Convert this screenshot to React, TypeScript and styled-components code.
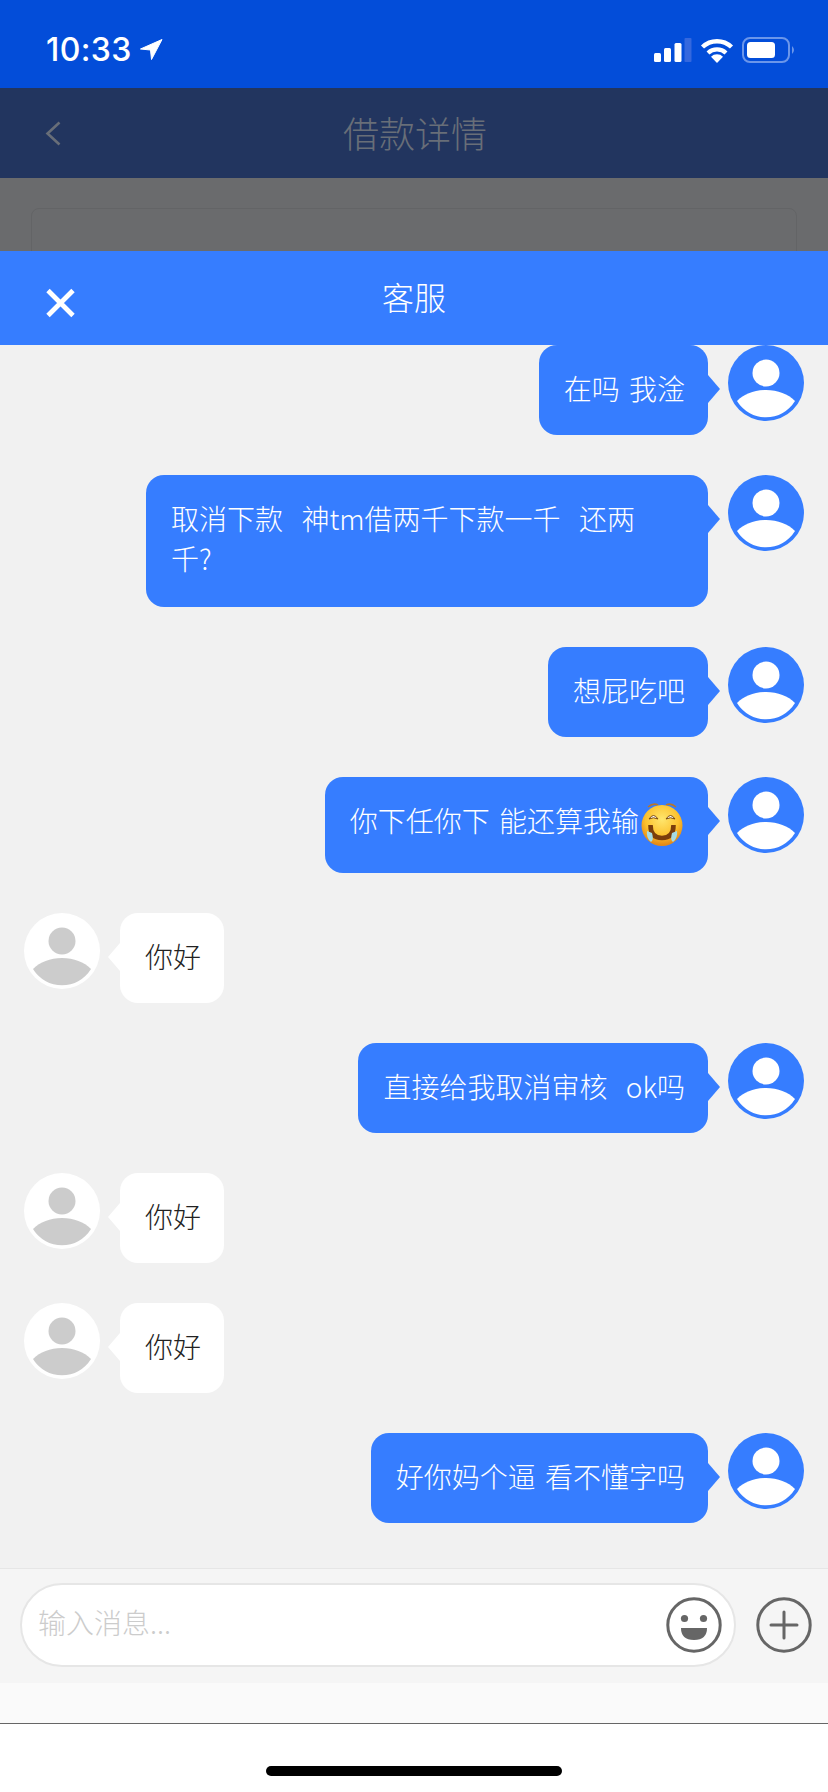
import { FC } from 'react';
import styled, { createGlobalStyle } from 'styled-components';

const GlobalStyle = createGlobalStyle`
  html, body {
    margin: 0;
    padding: 0;
    background: #fff;
  }
  * {
    box-sizing: border-box;
  }
`;

const BLUE = '#367dff';

interface Message {
  id: number;
  mine: boolean;
  text: string;
  emoji?: boolean;
  wide?: boolean;
}

const messages: Message[] = [
  { id: 1, mine: true, text: '在吗 我淦' },
  { id: 2, mine: true, text: '取消下款  神tm借两千下款一千  还两\n千?', wide: true },
  { id: 3, mine: true, text: '想屁吃吧' },
  { id: 4, mine: true, text: '你下任你下 能还算我输', emoji: true },
  { id: 5, mine: false, text: '你好' },
  { id: 6, mine: true, text: '直接给我取消审核  ok吗' },
  { id: 7, mine: false, text: '你好' },
  { id: 8, mine: false, text: '你好' },
  { id: 9, mine: true, text: '好你妈个逼 看不懂字吗' },
];

const Avatar: FC<{ mine: boolean }> = ({ mine }) => {
  const bg = mine ? BLUE : '#ffffff';
  const fg = mine ? '#ffffff' : '#cccccc';
  return (
    <S.AvatarIcon width="76" height="76" viewBox="0 0 76 76">
      <circle cx="38" cy="38" r="38" fill={bg} />
      <circle cx="38" cy="28" r="13.5" fill={fg} />
      <path d="M9 56 C16 49 26 45 38 45 C50 45 60 49 67 56 A34 34 0 0 1 9 56 Z" fill={fg} />
    </S.AvatarIcon>
  );
};

const LaughEmoji = () => (
  <S.Emoji width="46" height="44" viewBox="0 0 46 44">
    <defs>
      <radialGradient id="laughFace" cx="50%" cy="35%" r="62%">
        <stop offset="0%" stopColor="#ffe66e" />
        <stop offset="65%" stopColor="#fcc22f" />
        <stop offset="100%" stopColor="#e58a16" />
      </radialGradient>
    </defs>
    <path d="M9 5 Q14 0.5 19 3 M27 3 Q32 0.5 37 5" stroke="#b8772a" strokeWidth="1.6" fill="none" />
    <circle cx="23" cy="23.5" r="20.5" fill="url(#laughFace)" />
    <path d="M10 17 Q14.5 10 19 17 Q14.5 14.5 10 17 Z M27 17 Q31.5 10 36 17 Q31.5 14.5 27 17 Z" fill="#fff" stroke="#7a4a12" strokeWidth="1" />
    <path d="M11.5 23 Q11.5 36 23 36 Q34.5 36 34.5 23" stroke="#7a3d0c" strokeWidth="4.6" fill="none" />
    <path d="M8 29 Q7 36 12 40 Q15 38 13 31 Z M38 29 Q39 36 34 40 Q31 38 33 31 Z" fill="#a5dbe4" />
  </S.Emoji>
);

const App: FC = () => (
  <S.Screen>
    <GlobalStyle />
    <S.StatusBar>
      <S.TimeGroup>
        <S.Time>10:33</S.Time>
        <svg width="23" height="21" viewBox="0 0 23 21">
          <path d="M22 0.5 L0.5 10 L10.5 11 L11.5 20.5 Z" fill="#fff" stroke="#fff" strokeLinejoin="round" />
        </svg>
      </S.TimeGroup>
      <S.StatusIcons>
        <svg width="38" height="24" viewBox="0 0 38 24">
          <rect x="0" y="15" width="7" height="9" rx="1.5" fill="#fff" />
          <rect x="10" y="10" width="7" height="14" rx="1.5" fill="#fff" />
          <rect x="20.5" y="5" width="7" height="19" rx="1.5" fill="#fff" />
          <rect x="30.5" y="0" width="7" height="24" rx="1" fill="#3568de" />
        </svg>
        <svg width="34" height="25" viewBox="0 0 34 25">
          <path d="M2.5 9 A21 21 0 0 1 31.5 9" stroke="#fff" strokeWidth="4.4" fill="none" />
          <path d="M8 15 A13 13 0 0 1 26 15" stroke="#fff" strokeWidth="4.2" fill="none" />
          <path d="M11 18.8 A8.5 8.5 0 0 1 23 18.8 L17 25 Z" fill="#fff" />
        </svg>
        <svg width="54" height="26" viewBox="0 0 54 26">
          <rect x="1" y="1" width="46" height="24" rx="7" fill="none" stroke="#6b96ea" strokeWidth="2" />
          <rect x="5" y="5" width="28" height="16" rx="3.5" fill="#fff" />
          <path d="M50 9 Q54 13 50 17 Z" fill="#6b96ea" />
        </svg>
      </S.StatusIcons>
    </S.StatusBar>

    <S.NavBar>
      <S.BackIcon width="17" height="25" viewBox="0 0 17 25">
        <path d="M14.5 1.5 L2.5 12.5 L14.5 23.5" stroke="#686e78" strokeWidth="2.6" fill="none" />
      </S.BackIcon>
      <S.NavTitle>借款详情</S.NavTitle>
    </S.NavBar>

    <S.Dimmed>
      <S.GhostCard />
    </S.Dimmed>

    <S.ChatHeader>
      <S.CloseIcon width="31" height="30" viewBox="0 0 31 30">
        <path d="M3 2.5 L28 27.5 M28 2.5 L3 27.5" stroke="#fff" strokeWidth="4.8" />
      </S.CloseIcon>
      <S.ChatTitle>客服</S.ChatTitle>
    </S.ChatHeader>

    <S.MessageList>
      {messages.map((message) => (
        <S.Row key={message.id} $mine={message.mine}>
          {!message.mine && <Avatar mine={false} />}
          <S.Bubble $mine={message.mine} $wide={message.wide}>
            {message.text}
            {message.emoji && <LaughEmoji />}
          </S.Bubble>
          {message.mine && <Avatar mine />}
        </S.Row>
      ))}
    </S.MessageList>

    <S.Composer>
      <S.InputPill>
        <S.Input placeholder="输入消息..." readOnly />
        <svg width="56" height="56" viewBox="0 0 56 56">
          <circle cx="28" cy="28" r="26.2" fill="none" stroke="#666" strokeWidth="3" />
          <circle cx="18.5" cy="21.5" r="3.6" fill="#666" />
          <circle cx="37.5" cy="21.5" r="3.6" fill="#666" />
          <path d="M15 31 H41 Q41 43 28 43 Q15 43 15 31 Z" fill="#666" />
        </svg>
      </S.InputPill>
      <svg width="56" height="56" viewBox="0 0 56 56">
        <circle cx="28" cy="28" r="26.2" fill="none" stroke="#666" strokeWidth="3" />
        <path d="M28 15 V41 M15 28 H41" stroke="#666" strokeWidth="3" strokeLinecap="round" />
      </svg>
    </S.Composer>
    <S.ComposerFoot />

    <S.HomeArea>
      <S.HomeIndicator />
    </S.HomeArea>
  </S.Screen>
);

const S = {
  Screen: styled.div`
    width: 828px;
    height: 1792px;
    display: flex;
    flex-direction: column;
    overflow: hidden;
    background: #fff;
    font-family: 'Noto Sans CJK SC', 'Noto Sans', sans-serif;
    font-weight: 300;
  `,
  StatusBar: styled.div`
    height: 88px;
    flex: none;
    display: flex;
    justify-content: space-between;
    align-items: flex-start;
    padding: 37px 32px 0 46px;
    background: #034dd9;
  `,
  TimeGroup: styled.div`
    display: flex;
    align-items: center;
    gap: 8px;
    height: 25px;
  `,
  Time: styled.span`
    font-family: Inter, 'Liberation Sans', sans-serif;
    font-size: 32px;
    font-weight: 500;
    letter-spacing: 0.4px;
    line-height: 25px;
    color: #fff;
  `,
  StatusIcons: styled.div`
    display: flex;
    align-items: center;
    gap: 8px;
  `,
  NavBar: styled.div`
    height: 90px;
    flex: none;
    position: relative;
    display: flex;
    align-items: center;
    justify-content: center;
    padding: 0 0 2px 2px;
    background: #22355f;
  `,
  BackIcon: styled.svg`
    position: absolute;
    left: 45px;
    top: 33px;
  `,
  NavTitle: styled.h1`
    margin: 0;
    font-size: 36px;
    font-weight: 300;
    color: #686e78;
  `,
  Dimmed: styled.div`
    height: 73px;
    flex: none;
    overflow: hidden;
    padding: 30px 31px 0;
    background: #6a6b6d;
  `,
  GhostCard: styled.div`
    height: 60px;
    border: 1px solid #636466;
    border-radius: 8px;
  `,
  ChatHeader: styled.div`
    height: 94px;
    flex: none;
    position: relative;
    display: flex;
    align-items: center;
    justify-content: center;
    padding-bottom: 4px;
    background: ${BLUE};
  `,
  CloseIcon: styled.svg`
    position: absolute;
    left: 45px;
    top: 37px;
  `,
  ChatTitle: styled.h2`
    margin: 0;
    font-size: 32px;
    font-weight: 300;
    color: #fff;
  `,
  MessageList: styled.div`
    flex: 1;
    min-height: 0;
    display: flex;
    flex-direction: column;
    gap: 40px;
    padding: 0 24px;
    overflow: hidden;
    background: #f1f1f1;
  `,
  Row: styled.div<{ $mine: boolean }>`
    display: flex;
    align-items: flex-start;
    gap: 20px;
    justify-content: ${(p) => (p.$mine ? 'flex-end' : 'flex-start')};
  `,
  AvatarIcon: styled.svg`
    flex: none;
  `,
  Bubble: styled.div<{ $mine: boolean; $wide?: boolean }>`
    position: relative;
    max-width: 562px;
    width: ${(p) => (p.$wide ? '562px' : 'auto')};
    min-height: ${(p) => (p.$wide ? '132px' : '90px')};
    padding: 23px 23px 27px 25px;
    border-radius: 18px;
    font-size: 28px;
    line-height: 40px;
    white-space: pre-wrap;
    word-spacing: 3px;
    background: ${(p) => (p.$mine ? BLUE : '#fff')};
    color: ${(p) => (p.$mine ? '#fff' : '#222')};

    &::after {
      content: '';
      position: absolute;
      top: 30px;
      width: 12px;
      height: 28px;
      background: ${(p) => (p.$mine ? BLUE : '#fff')};
      ${(p) =>
        p.$mine
          ? 'left: 100%; clip-path: polygon(0 0, 100% 50%, 0 100%);'
          : 'right: 100%; clip-path: polygon(100% 0, 0 50%, 100% 100%);'}
    }
  `,
  Emoji: styled.svg`
    vertical-align: -14px;
  `,
  Composer: styled.div`
    height: 115px;
    flex: none;
    display: flex;
    align-items: center;
    gap: 20px;
    padding: 14px 0 16px 20px;
    border-top: 1px solid #e6e6e6;
    background: #f5f5f5;
  `,
  InputPill: styled.div`
    width: 716px;
    height: 84px;
    flex: none;
    display: flex;
    align-items: center;
    padding: 0 12px 0 16px;
    border: 2px solid #e6e6e6;
    border-radius: 42px;
    background: #fff;
  `,
  Input: styled.input`
    flex: 1;
    min-width: 0;
    border: 0;
    outline: 0;
    padding: 0 0 6px;
    background: transparent;
    font-family: inherit;
    font-weight: 300;
    font-size: 28px;
    color: #333;

    &::placeholder {
      color: #cccccc;
      opacity: 1;
    }
  `,
  ComposerFoot: styled.div`
    height: 41px;
    flex: none;
    background: #fafafa;
    border-bottom: 1px solid #666;
  `,
  HomeArea: styled.div`
    height: 68px;
    flex: none;
    display: flex;
    justify-content: center;
    padding-top: 42px;
    background: #fff;
  `,
  HomeIndicator: styled.div`
    width: 296px;
    height: 10px;
    border-radius: 5px;
    background: #000;
  `,
};

export default App;
